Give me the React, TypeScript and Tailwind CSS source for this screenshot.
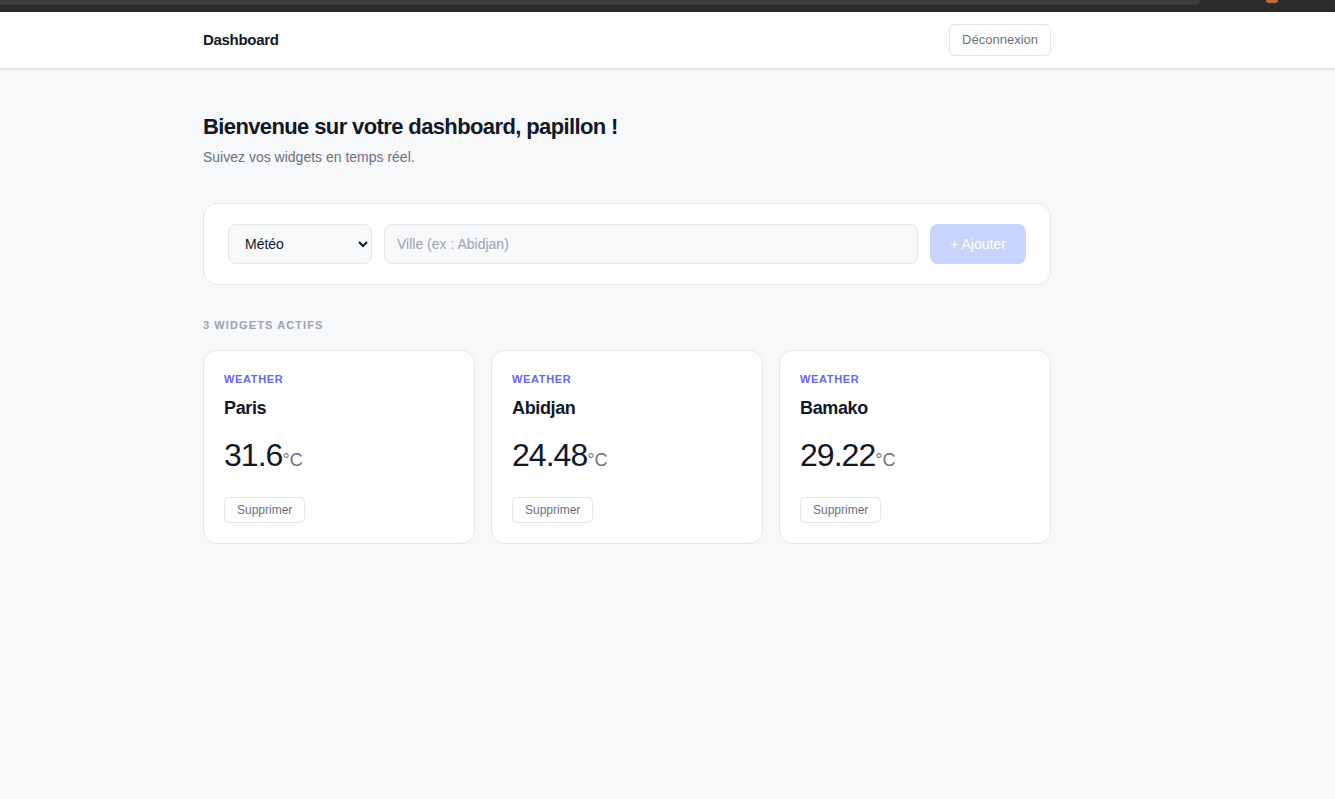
import { useState } from "react";

type Widget = { id: number; type: string; city: string; temp: string };

const initialWidgets: Widget[] = [
  { id: 1, type: "weather", city: "Paris", temp: "31.6" },
  { id: 2, type: "weather", city: "Abidjan", temp: "24.48" },
  { id: 3, type: "weather", city: "Bamako", temp: "29.22" },
];

function WidgetCard({ widget, onDelete }: { widget: Widget; onDelete: () => void }) {
  return (
    <div className="bg-white border border-[#e5e7eb] rounded-[14px] px-5 pt-[21px] pb-5 h-[194px]">
      <div className="text-[11px] font-bold tracking-[0.06em] uppercase text-[#6366f1] leading-[14px]">
        {widget.type}
      </div>
      <div className="mt-[11px] text-[18px] font-bold text-[#111827] tracking-[-0.02em] leading-[22px]">
        {widget.city}
      </div>
      <div className="mt-[16px] flex items-baseline text-[#111827] leading-[40px]">
        <span className="text-[32px] tracking-[-0.03em]">{widget.temp}</span>
        <span className="text-[18px] text-[#6b7280]">°C</span>
      </div>
      <button
        onClick={onDelete}
        className="mt-[17px] h-[26px] px-3 border border-[#e5e7eb] rounded-[5px] text-[12px] text-[#6b7280] bg-white"
      >
        Supprimer
      </button>
    </div>
  );
}

export default function App() {
  const [widgets, setWidgets] = useState(initialWidgets);
  const [city, setCity] = useState("");

  return (
    <div className="min-h-[799px] bg-[#f7f8fa] font-['Liberation_Sans',Arial,sans-serif]">
      {/* bout de barre du navigateur */}
      <div className="h-[12px] bg-[#2b2b2b] relative">
        <div className="h-[5px] w-[1200px] bg-[#3d3d3d] rounded-br-[6px]" />
        <div className="absolute left-[1266px] top-0 w-[12px] h-[3px] bg-[#c46a3a] rounded-b-full" />
      </div>

      {/* Header */}
      <header className="bg-white border-b-2 border-[#e5e7eb] h-[58px]">
        <div className="ml-[203px] w-[848px] h-full flex items-center justify-between">
          <span className="text-[15px] font-bold text-[#111827] tracking-[-0.02em]">Dashboard</span>
          <button className="h-[32px] px-3 border border-[#e5e7eb] rounded-[6px] text-[13px] text-[#6b7280] bg-white">
            Déconnexion
          </button>
        </div>
      </header>

      <main className="ml-[203px] w-[848px] pt-[43px]">
        <h1 className="text-[22px] font-bold text-[#111827] tracking-[-0.028em] leading-[28px]">
          Bienvenue sur votre dashboard, papillon !
        </h1>
        <p className="mt-[7px] text-[14px] text-[#6b7280] leading-[18px]">Suivez vos widgets en temps réel.</p>

        {/* Formulaire d'ajout */}
        <div className="mt-[37px] bg-white border border-[#e5e7eb] rounded-[14px] px-6 py-5 flex gap-3">
          <select className="w-[144px] h-[40px] px-3 bg-[#f7f8fa] border border-[#e5e7eb] rounded-[8px] text-[14px] text-[#111827]">
            <option>Météo</option>
          </select>
          <input
            value={city}
            onChange={(e) => setCity(e.target.value)}
            placeholder="Ville (ex : Abidjan)"
            className="flex-1 h-[40px] px-3 bg-[#f7f8fa] border border-[#e5e7eb] rounded-[8px] text-[14px] placeholder:text-[#9ca3af] outline-none"
          />
          <button
            disabled={!city}
            className="w-[96px] h-[40px] rounded-[8px] bg-[#c8d3fe] text-white text-[14px]"
          >
            + Ajouter
          </button>
        </div>

        <div className="mt-[33px] text-[11px] font-bold tracking-[0.1em] text-[#9ca3af] uppercase leading-[14px]">
          {widgets.length} widgets actifs
        </div>

        <div className="mt-[18px] grid grid-cols-3 gap-4">
          {widgets.map((w) => (
            <WidgetCard key={w.id} widget={w} onDelete={() => setWidgets(widgets.filter((x) => x.id !== w.id))} />
          ))}
        </div>
      </main>
    </div>
  );
}
